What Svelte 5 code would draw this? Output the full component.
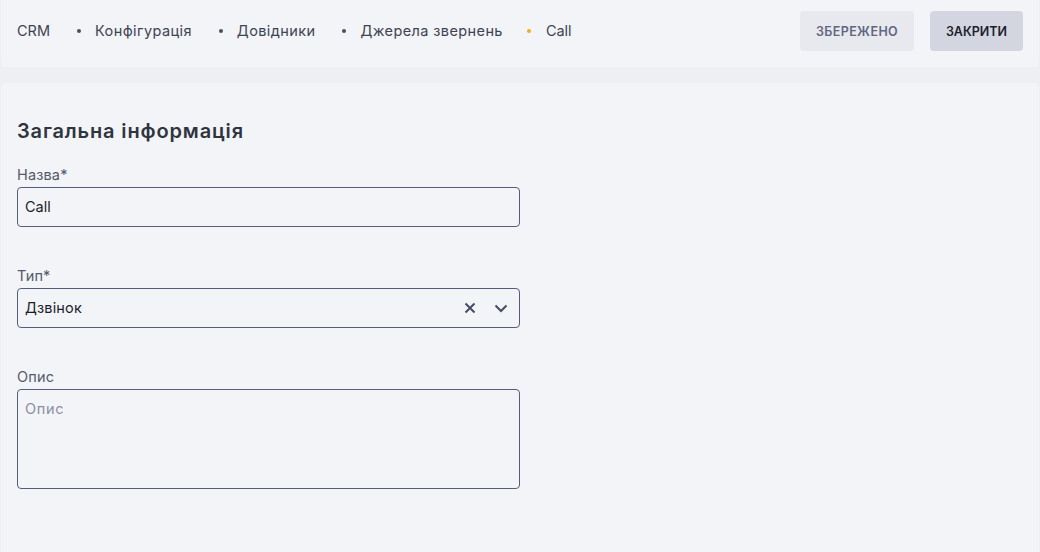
<script lang="ts">
  const crumbs = ['Конфігурація', 'Довідники', 'Джерела звернень']
</script>

<div class="page">
  <header class="bar">
    <nav class="crumbs">
      <span class="first">CRM</span>
      {#each crumbs as crumb}
        <span class="dot"></span>
        <span class="crumb">{crumb}</span>
      {/each}
      <span class="dot active"></span>
      <span class="first">Call</span>
    </nav>
    <div class="actions">
      <button class="saved">ЗБЕРЕЖЕНО</button>
      <button class="close">ЗАКРИТИ</button>
    </div>
  </header>

  <main class="card">
    <h2>Загальна інформація</h2>

    <div class="field">
      <span class="label">Назва*</span>
      <div class="box">Call</div>
    </div>

    <div class="field">
      <span class="label">Тип*</span>
      <div class="box select">
        <span>Дзвінок</span>
        <svg class="x" width="12" height="12" viewBox="0 0 12 12"><path d="M1.5 1.5l9 9M10.5 1.5l-9 9" /></svg>
        <svg class="chev" width="14" height="9" viewBox="0 0 14 9"><path d="M1.5 1.5L7 7l5.5-5.5" /></svg>
      </div>
    </div>

    <div class="field">
      <span class="label">Опис</span>
      <div class="box area">Опис</div>
    </div>
  </main>
</div>

<style>
  :global(body) {
    margin: 0;
    background: #eeeff3;
    font-family: Inter, 'Noto Sans', sans-serif;
  }

  .page {
    height: 552px;
    overflow: hidden;
    padding: 0 1px;
    box-sizing: border-box;
    display: flex;
    flex-direction: column;
    gap: 16px;
  }

  .bar {
    height: 67px;
    box-sizing: border-box;
    padding: 11px 16px 16px;
    display: flex;
    align-items: center;
    justify-content: space-between;
    background: #f2f4f8;
    border-radius: 0 0 6px 6px;
  }

  .crumbs {
    display: flex;
    align-items: center;
    font-size: 14.5px;
    line-height: 18px;
    color: #3e4354;
    margin-top: -1px;
  }

  .crumb {
    letter-spacing: 0.4px;
  }

  .dot {
    width: 4px;
    height: 4px;
    border-radius: 50%;
    background: #4a4f60;
    margin: 1px 14px 0 27px;
  }

  .dot.active {
    background: #f0ad1e;
    margin-left: 24px;
    margin-right: 15px;
  }

  .actions {
    display: flex;
    gap: 16px;
  }

  button {
    height: 40px;
    border: none;
    border-radius: 4px;
    font: 600 12.5px Inter, 'Noto Sans', sans-serif;
    padding: 0;
  }

  .saved {
    width: 114px;
    background: #e7e9ee;
    color: #616682;
    letter-spacing: 0.4px;
  }

  .close {
    width: 93px;
    background: #d3d6e1;
    color: #1c1f2b;
  }

  .card {
    flex: 1;
    background: #f2f4f8;
    border-radius: 6px 6px 0 0;
    padding: 35px 16px 0;
  }

  h2 {
    margin: 0 0 22px;
    font-size: 20px;
    line-height: 26px;
    font-weight: 600;
    letter-spacing: 0.85px;
    color: #30343f;
  }

  .field {
    width: 503px;
    height: 101px;
  }

  .label {
    display: block;
    font-size: 14.5px;
    line-height: 18px;
    margin-bottom: 3px;
    letter-spacing: 0.15px;
    color: #555a6a;
  }

  .box {
    box-sizing: border-box;
    height: 40px;
    padding: 0 7px 2px;
    border: 1px solid #565c7c;
    border-radius: 4px;
    display: flex;
    align-items: center;
    font-size: 14.5px;
    color: #1c1f2b;
  }

  .select span {
    flex: 1;
    letter-spacing: 0.15px;
  }

  .select svg {
    fill: none;
    stroke: #474c62;
    stroke-width: 2;
    margin-top: 2px;
  }

  .x {
    margin-right: 18px;
  }

  .chev {
    margin-right: 4px;
  }

  .area {
    height: 100px;
    align-items: flex-start;
    padding-top: 10px;
    letter-spacing: 0.7px;
    color: #8a8fa2;
  }
</style>
